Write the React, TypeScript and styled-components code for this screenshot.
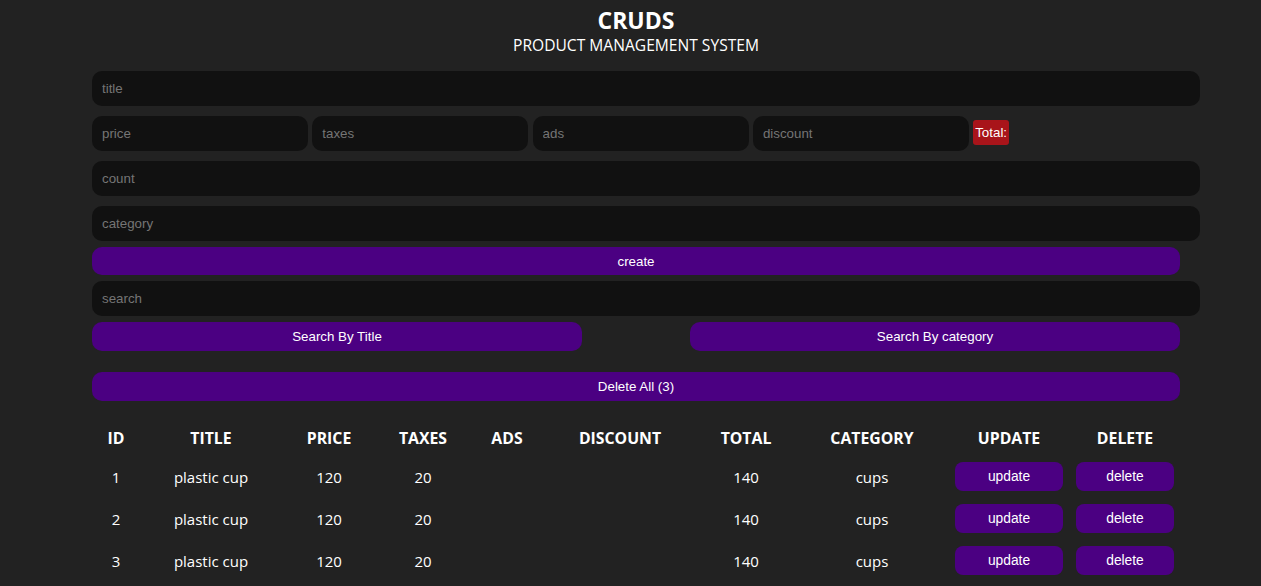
import React from "react";
import styled, { createGlobalStyle } from "styled-components";

const GlobalStyle = createGlobalStyle`
  html, body { margin: 0; padding: 0; background: #222; }
  body { color: #fff; font-family: "Open Sans", "Noto Sans", sans-serif; }
  * { box-sizing: border-box; }
`;

const Page = styled.div`
  width: 1088px;
  margin-left: 92px;
  padding-top: 5px;
`;

const Header = styled.header`
  text-align: center;
  margin-bottom: 15px;
`;

const Title = styled.h2`
  margin: 0;
  font-size: 23px;
  line-height: 30px;
  font-weight: 700;
`;

const Subtitle = styled.p`
  margin: 0;
  font-size: 15.6px;
  line-height: 21px;
  font-weight: 400;
`;

const Field = styled.input<{ $w?: number; $mb?: number }>`
  display: block;
  width: ${(p) => (p.$w ? `${p.$w}px` : "1108px")};
  height: 35px;
  margin: 0 0 ${(p) => p.$mb ?? 10}px 0;
  padding: 0 10px;
  border: none;
  outline: none;
  border-radius: 10px;
  background: #111;
  color: #fff;
  font-family: "Liberation Sans", Arial, sans-serif;
  font-size: 13.33px;
  &::placeholder { color: #757575; }
`;

const PriceRow = styled.div`
  display: flex;
  align-items: center;
  gap: 4.3px;
  margin-bottom: 10px;
  & > input { margin: 0; }
`;

const TotalBadge = styled.small`
  display: inline-block;
  background: #a8141a;
  color: #fff;
  font-family: "Liberation Sans", Arial, sans-serif;
  font-size: 13.33px;
  line-height: 25px;
  padding: 0 2px;
  border-radius: 3px;
  margin-top: -2px;
`;

const Button = styled.button<{ $w?: number; $h?: number; $mt?: number; $mb?: number }>`
  display: block;
  width: ${(p) => (p.$w ? `${p.$w}px` : "100%")};
  height: ${(p) => p.$h ?? 29}px;
  margin: ${(p) => p.$mt ?? 0}px 0 ${(p) => p.$mb ?? 0}px 0;
  border: none;
  border-radius: 10px;
  background: #4b0082;
  color: #fff;
  font-family: "Liberation Sans", Arial, sans-serif;
  font-size: 13.33px;
  cursor: pointer;
`;

const SearchRow = styled.div`
  display: flex;
  justify-content: space-between;
  margin-top: 6px;
`;

const Table = styled.table`
  width: 1088px;
  border-collapse: collapse;
  table-layout: fixed;
  margin-top: 19px;
  text-align: center;
`;

const HeadCell = styled.th`
  height: 36px;
  font-size: 15.8px;
  font-weight: 700;
  padding: 0;
`;

const Cell = styled.td`
  height: 42px;
  font-size: 15px;
  padding: 0;
  vertical-align: middle;
`;

const RowButton = styled.button<{ $w: number }>`
  display: inline-block;
  vertical-align: middle;
  width: ${(p) => p.$w}px;
  height: 29px;
  margin-top: -1px;
  border: none;
  border-radius: 8px;
  background: #4b0082;
  color: #fff;
  font-family: "Liberation Sans", Arial, sans-serif;
  font-size: 13.8px;
  cursor: pointer;
`;

const cols = [48, 142, 94, 94, 74, 152, 100, 152, 122, 110];
const heads = ["ID", "TITLE", "PRICE", "TAXES", "ADS", "DISCOUNT", "TOTAL", "CATEGORY", "UPDATE", "DELETE"];
const rows = [1, 2, 3].map((id) => ({ id, title: "plastic cup", price: 120, taxes: 20, ads: "", discount: "", total: 140, category: "cups" }));

export default function App() {
  return (
    <>
      <GlobalStyle />
      <Page>
        <Header>
          <Title>CRUDS</Title>
          <Subtitle>PRODUCT MANAGEMENT SYSTEM</Subtitle>
        </Header>
        <Field placeholder="title" />
        <PriceRow>
          <Field $w={216} placeholder="price" />
          <Field $w={216} placeholder="taxes" />
          <Field $w={216} placeholder="ads" />
          <Field $w={216} placeholder="discount" />
          <TotalBadge>Total:</TotalBadge>
        </PriceRow>
        <Field placeholder="count" />
        <Field placeholder="category" $mb={6} />
        <Button $h={28} $mb={6}>create</Button>
        <Field placeholder="search" $mb={0} />
        <SearchRow>
          <Button $w={490}>Search By Title</Button>
          <Button $w={490}>Search By category</Button>
        </SearchRow>
        <Button $mt={21}>Delete All (3)</Button>
        <Table>
          <colgroup>
            {cols.map((w, i) => (
              <col key={i} style={{ width: w }} />
            ))}
          </colgroup>
          <thead>
            <tr>
              {heads.map((h) => (
                <HeadCell key={h}>{h}</HeadCell>
              ))}
            </tr>
          </thead>
          <tbody>
            {rows.map((r) => (
              <tr key={r.id}>
                <Cell>{r.id}</Cell>
                <Cell>{r.title}</Cell>
                <Cell>{r.price}</Cell>
                <Cell>{r.taxes}</Cell>
                <Cell>{r.ads}</Cell>
                <Cell>{r.discount}</Cell>
                <Cell>{r.total}</Cell>
                <Cell>{r.category}</Cell>
                <Cell><RowButton $w={108}>update</RowButton></Cell>
                <Cell><RowButton $w={98}>delete</RowButton></Cell>
              </tr>
            ))}
          </tbody>
        </Table>
      </Page>
    </>
  );
}
